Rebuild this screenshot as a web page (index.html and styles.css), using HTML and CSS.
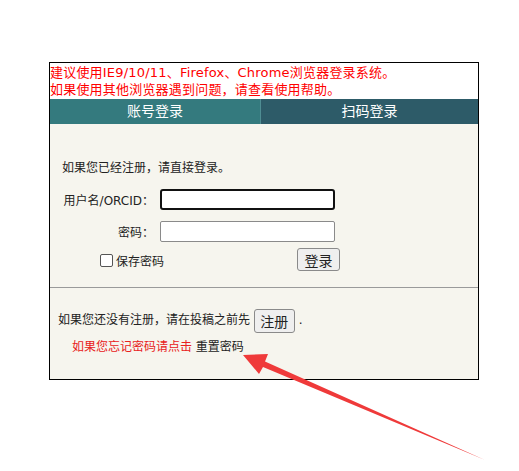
FILE: index.html
```html
<!DOCTYPE html>
<html lang="zh-CN">
<head>
<meta charset="UTF-8">
<title>登录</title>
<link rel="stylesheet" href="styles.css">
</head>
<body>
<div class="login-box">
    <div class="notice">
        <p>建议使用IE9/10/11、Firefox、Chrome浏览器登录系统。</p>
        <p>如果使用其他浏览器遇到问题，请查看使用帮助。</p>
    </div>
    <div class="tabs">
        <div class="tab active">账号登录</div>
        <div class="tab">扫码登录</div>
    </div>
    <div class="panel">
        <p class="intro">如果您已经注册，请直接登录。</p>
        <div class="form">
            <label class="label">用户名/ORCID：</label>
            <input type="text" class="field focused">
            <label class="label">密码：</label>
            <input type="password" class="field">
            <label class="remember"><span class="check"></span>保存密码</label>
            <button class="btn login-btn">登录</button>
        </div>
    </div>
    <div class="panel register">
        <p class="reg-line">如果您还没有注册，请在投稿之前先 <button class="btn reg-btn">注册</button> .</p>
        <p class="forgot"><span class="red">如果您忘记密码请点击</span> 重置密码</p>
    </div>
</div>
<svg class="arrow" width="519" height="471" viewBox="0 0 519 471">
    <polygon points="243,355 268,354 265,361.5 485,460 263,367 259,374" fill="#ef3a3a"/>
</svg>
</body>
</html>
```

FILE: styles.css
```css
body {
    margin: 0;
    background-color: #fff;
    font-family: "DejaVu Sans", "Noto Sans CJK SC", sans-serif;
    font-size: 12px;
    color: #222;
    position: relative;
    width: 519px;
    height: 471px;
    overflow: hidden;
}
p {
    margin: 0;
}
.login-box {
    width: 428px;
    margin: 62px 0 0 49px;
    border: 1px solid #000;
    background-color: #f6f5ee;
}
.notice {
    background-color: #fff;
    color: #f00;
    font-size: 13px;
    line-height: 17px;
    padding: 1px 0 1px 0;
    letter-spacing: 0.2px;
}
.tabs {
    display: flex;
    height: 25px;
}
.tab {
    flex: 1;
    color: #fff;
    font-size: 14px;
    line-height: 25px;
    text-align: center;
    background-color: #2d5b68;
}
.tab.active {
    flex: 0 0 210px;
    background-color: #347a7e;
    border-right: 1px solid #4f8d93;
}
.panel {
    padding: 0 0 0 12px;
}
.intro {
    padding-top: 35px;
    line-height: 18px;
}
.form {
    display: grid;
    grid-template-columns: 94px 175px;
    column-gap: 6px;
    row-gap: 11px;
    margin-top: 12px;
    margin-left: -2px;
    padding-bottom: 16px;
    align-items: center;
}
.label {
    text-align: right;
    grid-column: 1;
    white-space: nowrap;
}
.field {
    grid-column: 2;
    box-sizing: border-box;
    height: 21px;
    margin: 0;
    border: 1px solid #8a8a8a;
    border-radius: 2px;
    background-color: #fff;
}
.field.focused {
    border: 2px solid #111;
    border-radius: 3px;
}
.remember {
    grid-column: 1 / 3;
    grid-row: 3;
    display: flex;
    align-items: center;
    margin-left: 40px;
    white-space: nowrap;
    margin-top: -3px;
}
.check {
    flex-shrink: 0;
    width: 11px;
    height: 11px;
    border: 1px solid #555;
    border-radius: 2px;
    background-color: #fff;
    margin-right: 3px;
}
.btn {
    font-family: "Noto Sans CJK SC", sans-serif;
    background-color: #efefef;
    border: 1px solid #8a8a8a;
    border-radius: 3px;
    color: #222;
    padding: 0;
}
.login-btn {
    grid-column: 2;
    grid-row: 3;
    justify-self: end;
    width: 43px;
    height: 23px;
    font-size: 14px;
    margin-top: -5px;
    margin-right: -5px;
}
.register {
    border-top: 1px solid #9a9a9a;
    padding: 19px 0 23px 8px;
}
.reg-line {
    line-height: 26px;
}
.reg-btn {
    width: 41px;
    height: 24px;
    font-size: 14px;
    vertical-align: middle;
}
.forgot {
    margin-top: 5px;
    padding-left: 14px;
    line-height: 18px;
}
.red {
    color: #e82020;
}
.arrow {
    position: absolute;
    top: 0;
    left: 0;
    pointer-events: none;
}
```
